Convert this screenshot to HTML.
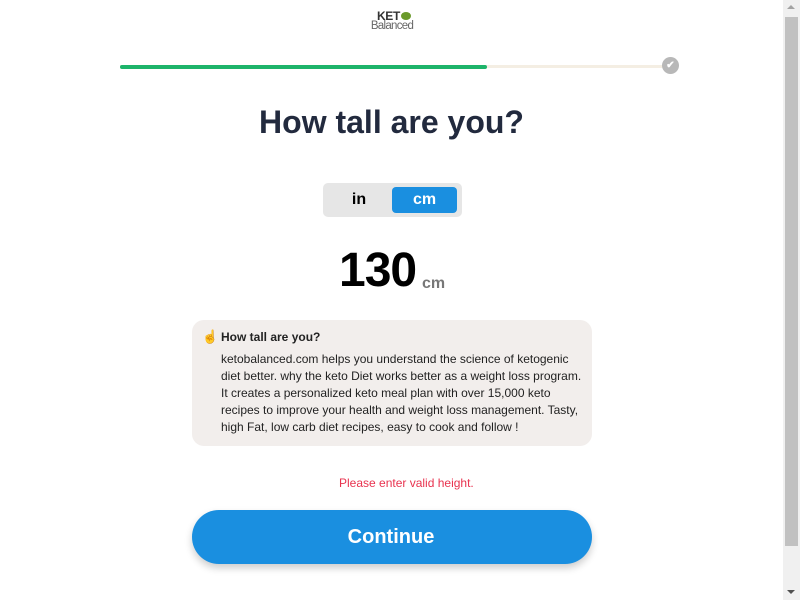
<!DOCTYPE html>
<html><head><style>
*{margin:0;padding:0;box-sizing:border-box}
body{width:800px;height:600px;overflow:hidden;background:#fff;font-family:"Liberation Sans",Arial,sans-serif;position:relative}
.abs{position:absolute}
</style></head><body>
<div class="abs" style="left:362px;top:10px;width:60px;text-align:center;line-height:1">
<div style="font-size:12px;font-weight:bold;color:#333;letter-spacing:-0.3px;padding-left:4px">KET<span style="display:inline-block;width:10px;height:8px;border-radius:50%;background:#6a9a2a;vertical-align:0;margin-left:1px"></span></div>
<div style="font-size:11.5px;color:#666;letter-spacing:-0.7px;margin-top:-1px">Balanced</div>
</div>
<div class="abs" style="left:120px;top:65px;width:550px;height:3px;background:#f4eee3"></div>
<div class="abs" style="left:120px;top:65px;width:367px;height:4px;background:#1db46a;border-radius:2px"></div>
<div class="abs" style="left:662px;top:57px;width:17px;height:17px;border-radius:50%;background:#b8b8b8;color:#fff;font-size:10px;text-align:center;line-height:17px;font-weight:bold">✔</div>
<div class="abs" style="left:0;top:104px;width:783px;text-align:center;font-size:32px;font-weight:bold;color:#222a3e">How tall are you?</div>
<div class="abs" style="left:323px;top:183px;width:139px;height:34px;background:#e6e6e6;border-radius:5px"></div>
<div class="abs" style="left:327px;top:187px;width:64px;height:26px;text-align:center;line-height:26px;font-size:16px;font-weight:bold">in</div>
<div class="abs" style="left:392px;top:187px;width:65px;height:26px;background:#1a8fe0;border-radius:4px;color:#fff;text-align:center;line-height:26px;font-size:16px;font-weight:bold">cm</div>
<div class="abs" style="left:339px;top:243px;font-size:48px;font-weight:bold;color:#000;line-height:56px;letter-spacing:-1px">130</div>
<div class="abs" style="left:422px;top:275px;font-size:16px;font-weight:bold;color:#777">cm</div>
<div class="abs" style="left:192px;top:320px;width:400px;height:126px;background:#f2eeec;border-radius:12px"></div>
<div class="abs" style="left:202px;top:329px;width:10px;height:16px;color:#f4a08a;font-size:13px">☝</div>
<div class="abs" style="left:221px;top:330px;font-size:12px;font-weight:bold;color:#222">How tall are you?</div>
<div class="abs" style="left:221px;top:351px;width:365px;font-size:12px;line-height:17px;color:#222">ketobalanced.com helps you understand the science of ketogenic diet better. why the keto Diet works better as a weight loss program. It creates a personalized keto meal plan with over 15,000 keto recipes to improve your health and weight loss management. Tasty, high Fat, low carb diet recipes, easy to cook and follow !</div>
<div class="abs" style="left:339px;top:476px;font-size:12px;color:#e8334f">Please enter valid height.</div>
<div class="abs" style="left:192px;top:510px;width:400px;height:54px;background:#1a8fe0;border-radius:27px;color:#fff;text-align:center;line-height:54px;font-size:20px;font-weight:bold;box-shadow:0 4px 8px rgba(0,0,0,0.2)"><span style="margin-left:-2px">Continue</span></div>
<div class="abs" style="left:783px;top:0;width:17px;height:600px;background:#f0f0f0"></div>
<div class="abs" style="left:785px;top:17px;width:13px;height:529px;background:#c1c1c1"></div>
<div class="abs" style="left:787px;top:5px;width:0;height:0;border-left:4px solid transparent;border-right:4px solid transparent;border-bottom:4px solid #a3a3a3"></div>
<div class="abs" style="left:787px;top:590px;width:0;height:0;border-left:4px solid transparent;border-right:4px solid transparent;border-top:4px solid #505050"></div>
</body></html>
